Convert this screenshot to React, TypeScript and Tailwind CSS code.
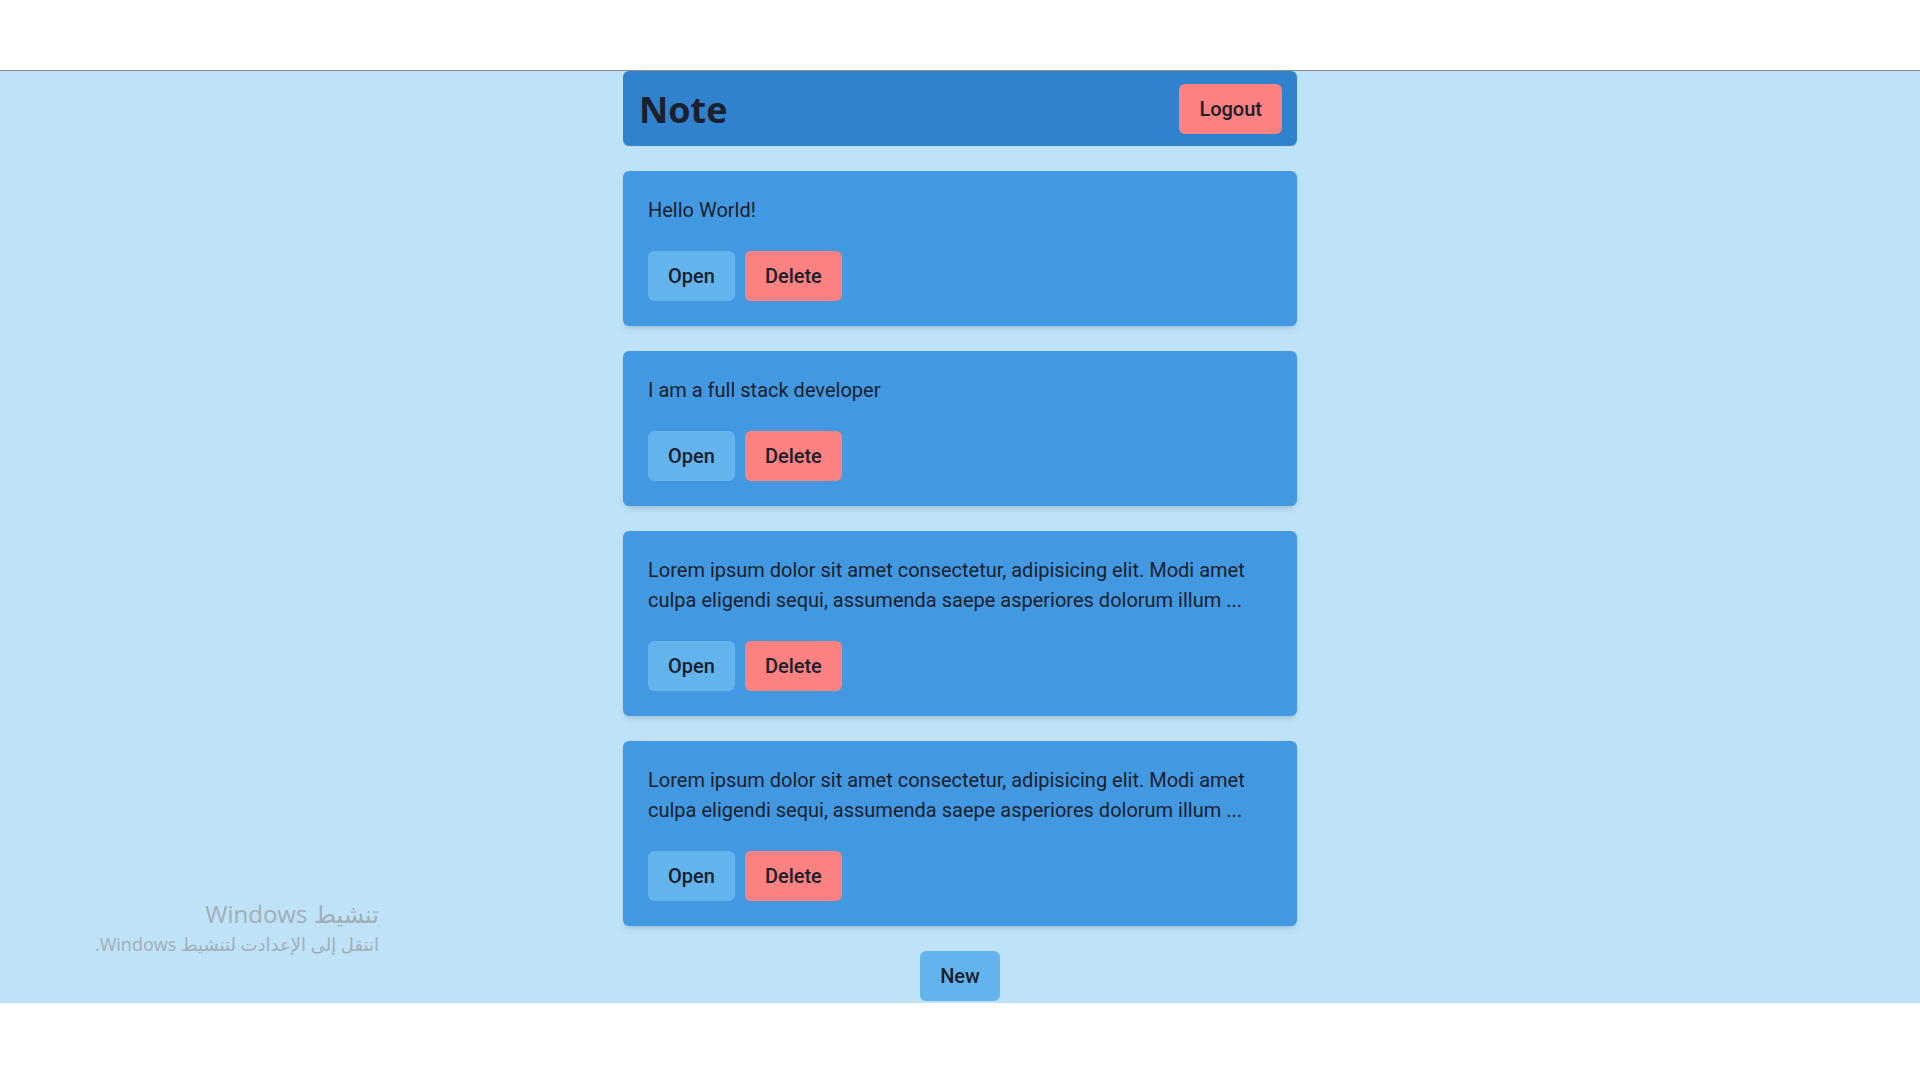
import React, { useState } from "react";

const initialNotes = [
  { id: 1, text: "Hello World!" },
  { id: 2, text: "I am a full stack developer" },
  {
    id: 3,
    text: "Lorem ipsum dolor sit amet consectetur, adipisicing elit. Modi amet culpa eligendi sequi, assumenda saepe asperiores dolorum illum ...",
  },
  {
    id: 4,
    text: "Lorem ipsum dolor sit amet consectetur, adipisicing elit. Modi amet culpa eligendi sequi, assumenda saepe asperiores dolorum illum ...",
  },
];

export default function App() {
  const [notes, setNotes] = useState(initialNotes);

  const deleteNote = (id: number) => {
    setNotes((prev) => prev.filter((n) => n.id !== id));
  };

  return (
    <div className="relative min-h-[1080px] bg-white font-['Roboto',sans-serif] text-[#1a202c]">
      <div className="h-[71px] border-b border-[#8a8a8a] bg-white" />
      <main className="flex flex-col items-center bg-[#bee3f8] pb-[2px]">
        <header className="flex h-[75px] w-full max-w-[674px] items-center justify-between rounded-md bg-[#3182ce] pl-4 pr-[15px]">
          <h1 className="pt-[3px] font-['Open_Sans',sans-serif] text-[36px] font-bold leading-none">Note</h1>
          <button className="h-[50px] rounded-md bg-[#fc8181] px-5 text-xl font-medium">Logout</button>
        </header>
        {notes.map((note) => (
          <section
            key={note.id}
            className="mt-[25px] w-full max-w-[674px] rounded-md bg-[#4299e1] px-[25px] pt-6 pb-[25px] shadow-md"
          >
            <p className="text-xl leading-[30px]">{note.text}</p>
            <div className="mt-[26px] flex gap-2.5">
              <button className="h-[50px] rounded-md bg-[#63b3ed] px-5 text-xl font-medium">Open</button>
              <button
                onClick={() => deleteNote(note.id)}
                className="h-[50px] rounded-md bg-[#fc8181] px-5 text-xl font-medium"
              >
                Delete
              </button>
            </div>
          </section>
        ))}
        <button className="mt-[25px] h-[50px] rounded-md bg-[#63b3ed] px-5 text-xl font-medium">New</button>
      </main>

      {/* windows activation watermark */}
      <div
        dir="rtl"
        className="pointer-events-none absolute top-[898px] left-0 w-[379px] font-['Open_Sans','DejaVu_Sans',sans-serif] text-[#a3adb6]"
      >
        <div className="text-[24px] leading-[32px]">تنشيط Windows</div>
        <div className="text-[18px] leading-[28px]">انتقل إلى الإعدادت لتنشيط Windows.</div>
      </div>
    </div>
  );
}
